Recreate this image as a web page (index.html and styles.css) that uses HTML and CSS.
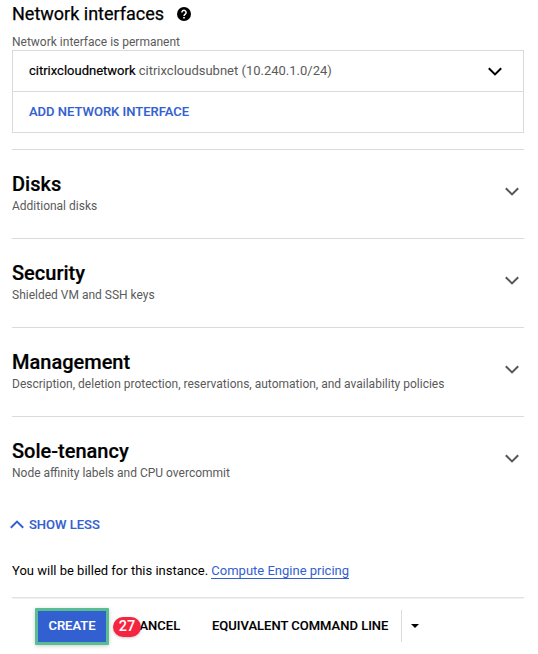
FILE: index.html
```html
<!DOCTYPE html>
<html lang="en">
<head>
<meta charset="utf-8">
<title>Network interfaces</title>
<link rel="stylesheet" href="styles.css">
</head>
<body>
<main class="page">
  <header class="title">
    <h1>Network interfaces</h1>
    <svg class="help" viewBox="0 0 14 14"><circle cx="7" cy="7" r="7"/><path d="M4.9 5.5a2.1 2.1 0 1 1 3.3 1.7C7.4 7.8 7 8.1 7 9" fill="none" stroke="#fff" stroke-width="1.5"/><path d="M6.2 10h1.6v1.6H6.2z" fill="#fff"/></svg>
  </header>
  <p class="hint">Network interface is permanent</p>
  <div class="card">
    <div class="row">
      <span class="net"><b>citrixcloudnetwork</b> citrixcloudsubnet (10.240.1.0/24)</span>
      <svg class="chev dark" viewBox="0 0 14 9"><path d="M.8 1.2 7 7.4l6.2-6.2"/></svg>
    </div>
    <div class="row"><a class="add">ADD NETWORK INTERFACE</a></div>
  </div>

  <section class="panel">
    <div><h2>Disks</h2><p>Additional disks</p></div>
    <svg class="chev" viewBox="0 0 14 9"><path d="M.8 1.2 7 7.4l6.2-6.2"/></svg>
  </section>
  <section class="panel">
    <div><h2>Security</h2><p>Shielded VM and SSH keys</p></div>
    <svg class="chev" viewBox="0 0 14 9"><path d="M.8 1.2 7 7.4l6.2-6.2"/></svg>
  </section>
  <section class="panel">
    <div><h2>Management</h2><p>Description, deletion protection, reservations, automation, and availability policies</p></div>
    <svg class="chev" viewBox="0 0 14 9"><path d="M.8 1.2 7 7.4l6.2-6.2"/></svg>
  </section>
  <section class="panel">
    <div><h2>Sole-tenancy</h2><p>Node affinity labels and CPU overcommit</p></div>
    <svg class="chev" viewBox="0 0 14 9"><path d="M.8 1.2 7 7.4l6.2-6.2"/></svg>
  </section>

  <div class="less"><svg class="chev blue" viewBox="0 0 14 9"><path d="M.8 7.8 7 1.6l6.2 6.2"/></svg><span>SHOW LESS</span></div>
  <p class="bill">You will be billed for this instance. <a>Compute Engine pricing</a></p>

  <footer class="actions">
    <button class="create">CREATE</button>
    <div class="cancel"><button>CANCEL</button><span class="badge">27</span></div>
    <button class="command">EQUIVALENT COMMAND LINE</button>
    <button class="more"><svg viewBox="0 0 8 4"><path d="M0 0h8L4 4z"/></svg></button>
  </footer>
</main>
</body>
</html>
```
FILE: styles.css
```css
* { box-sizing: border-box; }
body { margin: 0; background: #fff; color: #000; font-family: Roboto, "Liberation Sans", sans-serif; font-size: 13px; }
h1, h2, p { margin: 0; }
button { border: 0; padding: 0; margin: 0; background: none; font: 500 13px Roboto, "Liberation Sans", sans-serif; color: #000; text-align: left; white-space: nowrap; -webkit-text-stroke: .12px currentColor; }
svg { display: block; flex: none; }

.page { width: 512px; margin-left: 12px; }
.title { display: flex; align-items: center; gap: 13px; height: 28px; }
h1 { font-size: 18px; font-weight: 400; line-height: 28px; -webkit-text-stroke: .25px #000; }
.help { width: 14px; height: 14px; }
.hint { padding-top: 6px; font-size: 12px; line-height: 16px; color: #5a5a5a; }

.card { border: 1px solid #dadada; }
.row { display: flex; align-items: center; justify-content: space-between; height: 40px; padding: 0 21px 0 16px; }
.row + .row { height: 41px; border-top: 1px solid #dadada; }
.net { padding-bottom: 2px; color: #5a5a5a; }
.net b { font-weight: 400; color: #000; -webkit-text-stroke: .2px #000; }
.add { padding-bottom: 2px; color: #3360d0; font-weight: 500; -webkit-text-stroke: .12px #3360d0; }

.chev { width: 14px; height: 9px; fill: none; stroke: #555; stroke-width: 2; }
.chev.dark { stroke: #000; }
.chev.blue { stroke: #3360d0; }

.panel { display: flex; justify-content: space-between; height: 89px; padding: 22px 5px 0 0; border-top: 1px solid #dadada; }
.card + .panel { margin-top: 16px; }
.panel h2 { font-size: 20px; font-weight: 500; line-height: 24px; -webkit-text-stroke: .2px #000; }
.panel p { margin-top: 2px; font-size: 12px; line-height: 16px; color: #5a5a5a; }
.panel .chev { margin-top: 15px; }

.less { display: flex; align-items: center; gap: 5px; height: 20px; margin: 9px 0 0 -2px; color: #3360d0; font-weight: 500; -webkit-text-stroke: .12px #3360d0; }
.bill { margin-top: 29px; line-height: 16px; height: 34px; }
.bill a { color: #3360d0; border-bottom: 1px solid #3360d0; }

.actions { display: flex; align-items: center; height: 57px; padding: 0 0 1px 23px; border-top: 1px solid #e2e2e2; box-shadow: inset 0 1px #f1f1f1; }
.create { width: 74px; height: 37px; border: 3px solid #58be92; border-radius: 1px; background: #3360d0; color: #fff; text-align: center; box-shadow: 0 1px 4px rgba(0, 0, 0, .2); line-height: 29px; padding-bottom: 2px; margin-top: 2px; }
.cancel { position: relative; margin-left: 22px; width: 81px; }
.badge { position: absolute; left: -18px; top: -1px; width: 28px; height: 20px; border-radius: 10px; background: #f6253f; color: #fff; font-size: 14.5px; font-weight: 500; line-height: 20px; text-align: center; box-shadow: 0 1px 3px rgba(0, 0, 0, .2); }
.command { width: 189px; }
.more { display: flex; align-items: center; height: 32px; padding-left: 9px; border-left: 1px solid #dadada; }
.more svg { width: 8px; height: 4px; }
```
